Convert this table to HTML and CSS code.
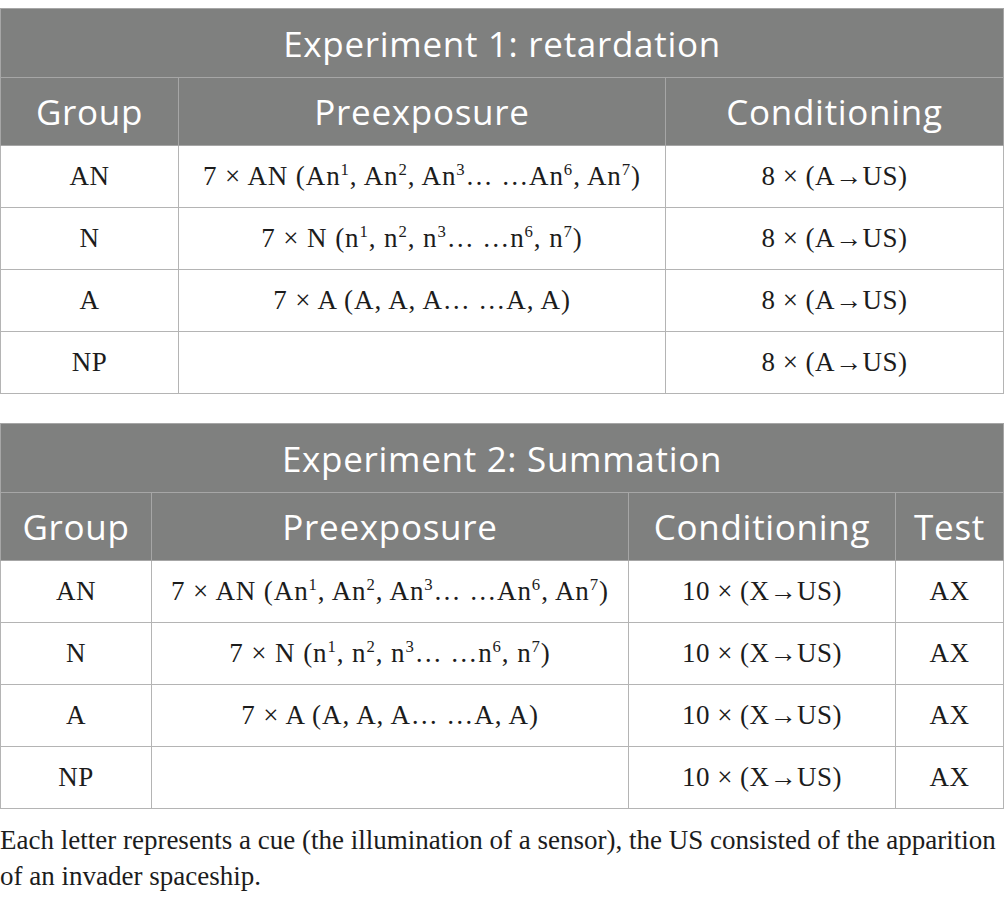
FILE: index.html
```html
<!DOCTYPE html>
<html lang="en">
  <head>
    <meta charset="UTF-8" />
    <title>Experiments</title>
    <link rel="stylesheet" href="styles.css">
  </head>
  <body>
    <table class="exp exp-one">
      <colgroup>
        <col class="c-group" />
        <col class="c-pre" />
        <col class="c-cond" />
      </colgroup>
      <thead>
        <tr class="title-row"><th colspan="3">Experiment 1: retardation</th></tr>
        <tr class="head-row">
          <th>Group</th>
          <th>Preexposure</th>
          <th>Conditioning</th>
        </tr>
      </thead>
      <tbody>
        <tr>
          <td>AN</td>
          <td class="pre">7 × AN (An<sup>1</sup>, An<sup>2</sup>, An<sup>3</sup>… …An<sup>6</sup>, An<sup>7</sup>)</td>
          <td>8 × (A→US)</td>
        </tr>
        <tr>
          <td>N</td>
          <td class="pre">7 × N (n<sup>1</sup>, n<sup>2</sup>, n<sup>3</sup>… …n<sup>6</sup>, n<sup>7</sup>)</td>
          <td>8 × (A→US)</td>
        </tr>
        <tr>
          <td>A</td>
          <td class="pre">7 × A (A, A, A… …A, A)</td>
          <td>8 × (A→US)</td>
        </tr>
        <tr>
          <td>NP</td>
          <td class="pre"></td>
          <td>8 × (A→US)</td>
        </tr>
      </tbody>
    </table>

    <table class="exp exp-two">
      <colgroup>
        <col class="c-group" />
        <col class="c-pre" />
        <col class="c-cond" />
        <col class="c-test" />
      </colgroup>
      <thead>
        <tr class="title-row"><th colspan="4">Experiment 2: Summation</th></tr>
        <tr class="head-row">
          <th>Group</th>
          <th>Preexposure</th>
          <th>Conditioning</th>
          <th>Test</th>
        </tr>
      </thead>
      <tbody>
        <tr>
          <td>AN</td>
          <td class="pre">7 × AN (An<sup>1</sup>, An<sup>2</sup>, An<sup>3</sup>… …An<sup>6</sup>, An<sup>7</sup>)</td>
          <td>10 × (X→US)</td>
          <td>AX</td>
        </tr>
        <tr>
          <td>N</td>
          <td class="pre">7 × N (n<sup>1</sup>, n<sup>2</sup>, n<sup>3</sup>… …n<sup>6</sup>, n<sup>7</sup>)</td>
          <td>10 × (X→US)</td>
          <td>AX</td>
        </tr>
        <tr>
          <td>A</td>
          <td class="pre">7 × A (A, A, A… …A, A)</td>
          <td>10 × (X→US)</td>
          <td>AX</td>
        </tr>
        <tr>
          <td>NP</td>
          <td class="pre"></td>
          <td>10 × (X→US)</td>
          <td>AX</td>
        </tr>
      </tbody>
    </table>

    <p class="note">
      Each letter represents a cue (the illumination of a sensor), the US consisted of the apparition of an invader spaceship.
    </p>
  </body>
</html>
```

FILE: styles.css
```css
body {
  margin: 0;
  padding-top: 8px;
  background: #fff;
  color: #1c1c1c;
  font-family: "Liberation Serif", "Times New Roman", serif;
}
.exp {
  width: 1004px;
  border-collapse: collapse;
  table-layout: fixed;
  margin-bottom: 29px;
}
.exp th,
.exp td {
  border: 1px solid #b4b4b4;
  text-align: center;
  padding: 0;
}
.exp thead th {
  background: #7f807f;
  color: #fff;
  font-family: "Open Sans", Lato, sans-serif;
  font-weight: 400;
  font-size: 35px;
  letter-spacing: 0.7px;
  border-color: #a6a6a6;
}
.title-row th {
  height: 68px;
}
.head-row th {
  height: 67px;
}
.exp td {
  height: 61px;
  font-size: 27px;
  letter-spacing: 0.5px;
}
.exp td.pre {
  letter-spacing: 0.9px;
}
.exp sup {
  font-size: 0.62em;
  line-height: 0;
  vertical-align: 0.62em;
}
.exp-one .c-group { width: 178px; }
.exp-one .c-pre { width: 487px; }
.exp-two .c-group { width: 151px; }
.exp-two .c-pre { width: 477px; }
.exp-two .c-cond { width: 267px; }
.exp-two {
  margin-bottom: 0;
}
.note {
  margin: 0;
  padding-top: 13px;
  width: 1005px;
  font-size: 27px;
  line-height: 36px;
}
```
